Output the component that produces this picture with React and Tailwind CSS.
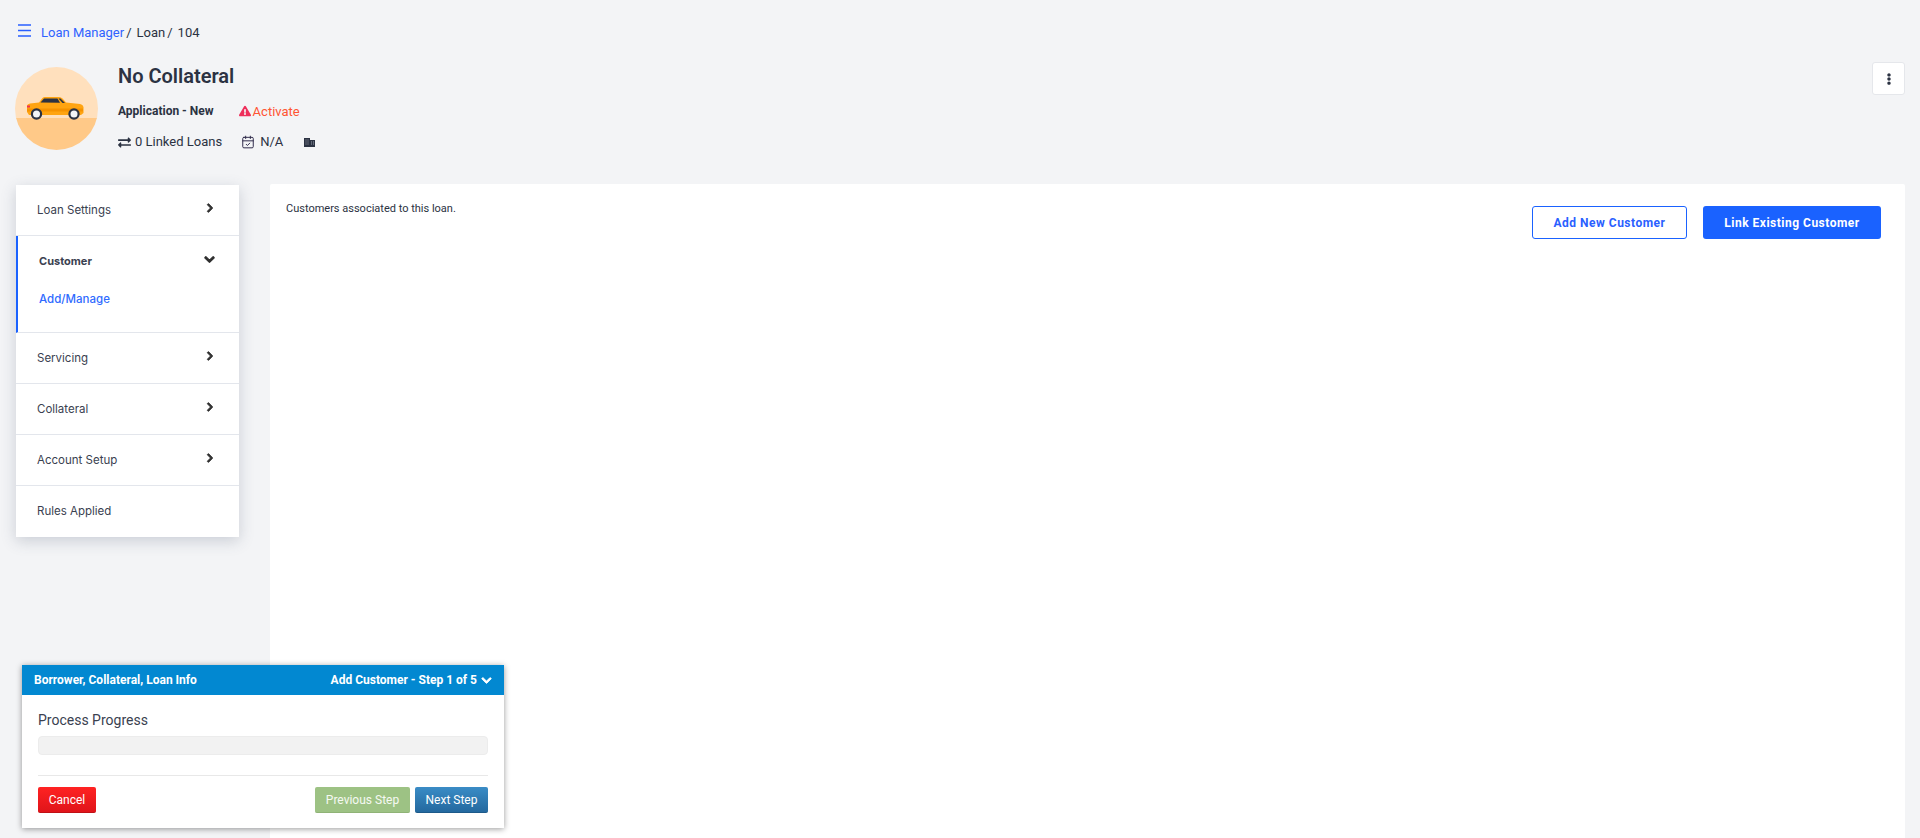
import React from 'react';
import { FaChevronRight, FaChevronDown, FaExclamationTriangle, FaExchangeAlt, FaEllipsisV } from 'react-icons/fa';
import { CalendarCheck } from 'lucide-react';

// avatar illustration
function CarAvatar() {
  return (
    <svg width="83" height="83" viewBox="0 0 83 83" className="shrink-0">
      <defs>
        <clipPath id="avatarClip"><circle cx="41.5" cy="41.5" r="41.5" /></clipPath>
      </defs>
      <g clipPath="url(#avatarClip)">
        <rect width="83" height="52" fill="#ffe0bd" />
        <rect y="51" width="83" height="32" fill="#ffc988" />
      </g>
      <path d="M12 39.5 Q12 37 15 36.5 L24 35.5 L27.5 31 Q28.5 30 30 30 L44 30 Q46 30 47.500 31.500 L51 35.5 L65 37 Q68 37.500 68.500 40 L68.500 46 L66 48 L14 48 L12 45 Z" fill="#ffa411" />
      <path d="M12 41.500 L68 41.500 L68 44.500 L12 44.500 Z" fill="#f59200" />
      <path d="M25.500 35.500 L29 31.500 L42.500 31.500 L45 35.800 Z" fill="#2b3242" />
      <path d="M43.500 31.500 L45.500 31.500 L50 36 L47.500 36 Z" fill="#2b3242" />
      <rect x="12" y="38.500" width="3" height="2" fill="#f0324f" />
      <circle cx="21.500" cy="47" r="5.700" fill="#2b3242" />
      <circle cx="21.500" cy="47" r="3.500" fill="#f2f4f7" />
      <circle cx="59" cy="47" r="5.700" fill="#2b3242" />
      <circle cx="59" cy="47" r="3.500" fill="#f2f4f7" />
    </svg>
  );
}

function BuildingIcon() {
  return (
    <svg width="11" height="9" viewBox="0 0 11 9" fill="#2b3242">
      <path d="M0 0h6v2h5v7H0z" />
      <path d="M1.500 1.500h1v1h-1zM3.500 1.500h1v1h-1zM1.500 3.500h1v1h-1zM3.500 3.500h1v1h-1zM1.500 5.500h1v1h-1zM3.500 5.500h1v1h-1zM7 3.500h1v1H7zM9 3.500h1v1H9zM7 5.500h1v1H7zM9 5.500h1v1H9z" fill="#9aa0ad" />
    </svg>
  );
}

function SideRow({ label, chevron = true }) {
  return (
    <div className="h-[51px] flex items-center justify-between pl-[21px] pr-[24px] border-b-[1px] border-[#e3e6ec] last:border-b-0">
      <span className="text-[11.5px] text-[#3a4150] font-['Inter',sans-serif] pt-[1px]">{label}</span>
      {chevron && <FaChevronRight stroke="currentColor" strokeWidth={50} className="text-[#2f2f2f] text-[10px] mb-[4px]" />}
    </div>
  );
}

export default function App() {
  return (
    <div className="relative h-[838px] overflow-hidden bg-[#f3f4f6] font-['Roboto',sans-serif] text-[#2b3242]">
      {/* Breadcrumb */}
      <div className="flex items-center h-[14px] mt-[24px] pl-[18px] text-[13px]">
        <svg width="13" height="13" viewBox="0 0 13 13" className="text-[#2a5fff] mb-[2px]" stroke="currentColor" strokeWidth="1.300">
          <path d="M0 1h13M0 6.500h13M0 12h13" />
        </svg>
        <a className="ml-[10px] mt-[4px] text-[#2f62ff]">Loan Manager</a>
        <span className="ml-[2px] mt-[4px]">/</span>
        <span className="ml-[5px] mt-[4px]">Loan</span>
        <span className="ml-[2px] mt-[4px]">/</span>
        <span className="ml-[5px] mt-[4px]">104</span>
      </div>

      {/* Loan header */}
      <div className="flex pl-[15px] pr-[15px] mt-[24px] h-[121px]">
        <div className="pt-[5px]"><CarAvatar /></div>
        <div className="ml-[20px] flex-1">
          <h1 className="text-[20px] leading-[28px] font-semibold mt-0">No Collateral</h1>
          <div className="flex items-center mt-[11px] h-[20px]">
            <span className="text-[12px] font-bold text-[#2b3242]">Application - New</span>
            <FaExclamationTriangle className="ml-[25px] text-[12px] text-[#ee2f5b]" />
            <span className="ml-[2px] text-[13px] text-[#ff5533] mt-[1px]">Activate</span>
          </div>
          <div className="flex items-center mt-[11px] h-[20px] text-[13px]">
            <FaExchangeAlt className="text-[13px]" />
            <span className="ml-[4px]">0 Linked Loans</span>
            <CalendarCheck size={14} strokeWidth={1.700} className="ml-[19px] text-[#2f2a4a]" />
            <span className="ml-[5px]">N/A</span>
            <span className="ml-[21px]"><BuildingIcon /></span>
          </div>
        </div>
        <button className="w-[33px] h-[33px] flex items-center justify-center bg-white border border-[#e5e7eb] rounded-[3px]">
          <FaEllipsisV className="text-[12px]" />
        </button>
      </div>

      {/* Body */}
      <div className="flex items-start pl-[16px] pr-[15px] mt-[1px]">
        <nav className="w-[223px] shrink-0 bg-white mt-[1px] shadow-[0_4px_14px_rgba(60,75,100,0.22)]">
          <SideRow label="Loan Settings" />
          <div className="h-[97px] border-l-[2px] border-l-[#1a62ff] border-b border-b-[#e3e6ec] pl-[21px] pr-[24px]">
            <div className="flex items-center justify-between h-[50px]">
              <span className="text-[11px] font-bold text-[#3a4150] font-['Inter',sans-serif]">Customer</span>
              <FaChevronDown stroke="currentColor" strokeWidth={50} className="text-[#2f2f2f] text-[11px] mb-[3px]" />
            </div>
            <div className="text-[11.5px] font-medium text-[#2f6bff] mt-[5px] font-['Inter',sans-serif]">Add/Manage</div>
          </div>
          <SideRow label="Servicing" />
          <SideRow label="Collateral" />
          <SideRow label="Account Setup" />
          <SideRow label="Rules Applied" chevron={false} />
        </nav>

        <main className="ml-[31px] flex-1 h-[660px] bg-white rounded-[2px] pt-[17px] pl-[16px] pr-[24px] flex justify-between">
          <p className="text-[11px] text-[#2b3242] leading-[16px]">Customers associated to this loan.</p>
          <div className="flex gap-[16px] mt-[5px] h-[33px]">
            <button className="w-[155px] h-[33px] border border-[#1a62ff] rounded-[3px] bg-white text-[#2a5fff] text-[12px] font-bold tracking-[0.5px]">Add New Customer</button>
            <button className="w-[178px] h-[33px] rounded-[3px] bg-[#1a62ff] text-white text-[12px] font-bold tracking-[0.5px]">Link Existing Customer</button>
          </div>
        </main>
      </div>

      {/* Floating process panel */}
      <div className="absolute left-[22px] bottom-[10px] w-[482px] h-[163px] bg-white shadow-[0_1px_6px_rgba(0,0,0,0.4)]">
        <div className="h-[30px] bg-[#0288d1] flex items-center justify-between pl-[12px] pr-[12px] text-white text-[12px] font-bold">
          <span>Borrower, Collateral, Loan Info</span>
          <span className="flex items-center gap-[4px]">Add Customer - Step 1 of 5 <FaChevronDown stroke="currentColor" strokeWidth={40} className="text-[11px]" /></span>
        </div>
        <div className="px-[16px]">
          <div className="text-[14px] text-[#3a4150] mt-[16px] leading-[18px]">Process Progress</div>
          <div className="h-[19px] mt-[7px] rounded-[4px] bg-[#f2f2f2] border border-[#ececec]" />
          <div className="h-px bg-[#e8e8e8] mt-[20px]" />
          <div className="flex justify-between mt-[11px]">
            <button className="w-[58px] h-[26px] rounded-[2px] text-white text-[12px] bg-gradient-to-b from-[#ff2222] to-[#e0141a] border-b border-[#c01015]">Cancel</button>
            <div className="flex gap-[5px]">
              <button className="w-[95px] h-[26px] rounded-[2px] text-white/90 text-[12px] bg-[#9dc284] border-b border-[#8fb376]">Previous Step</button>
              <button className="w-[73px] h-[26px] rounded-[2px] text-white text-[12px] bg-gradient-to-b from-[#3a8cc6] to-[#24699f] border-b border-[#1d5a8a]">Next Step</button>
            </div>
          </div>
        </div>
      </div>
    </div>
  );
}
